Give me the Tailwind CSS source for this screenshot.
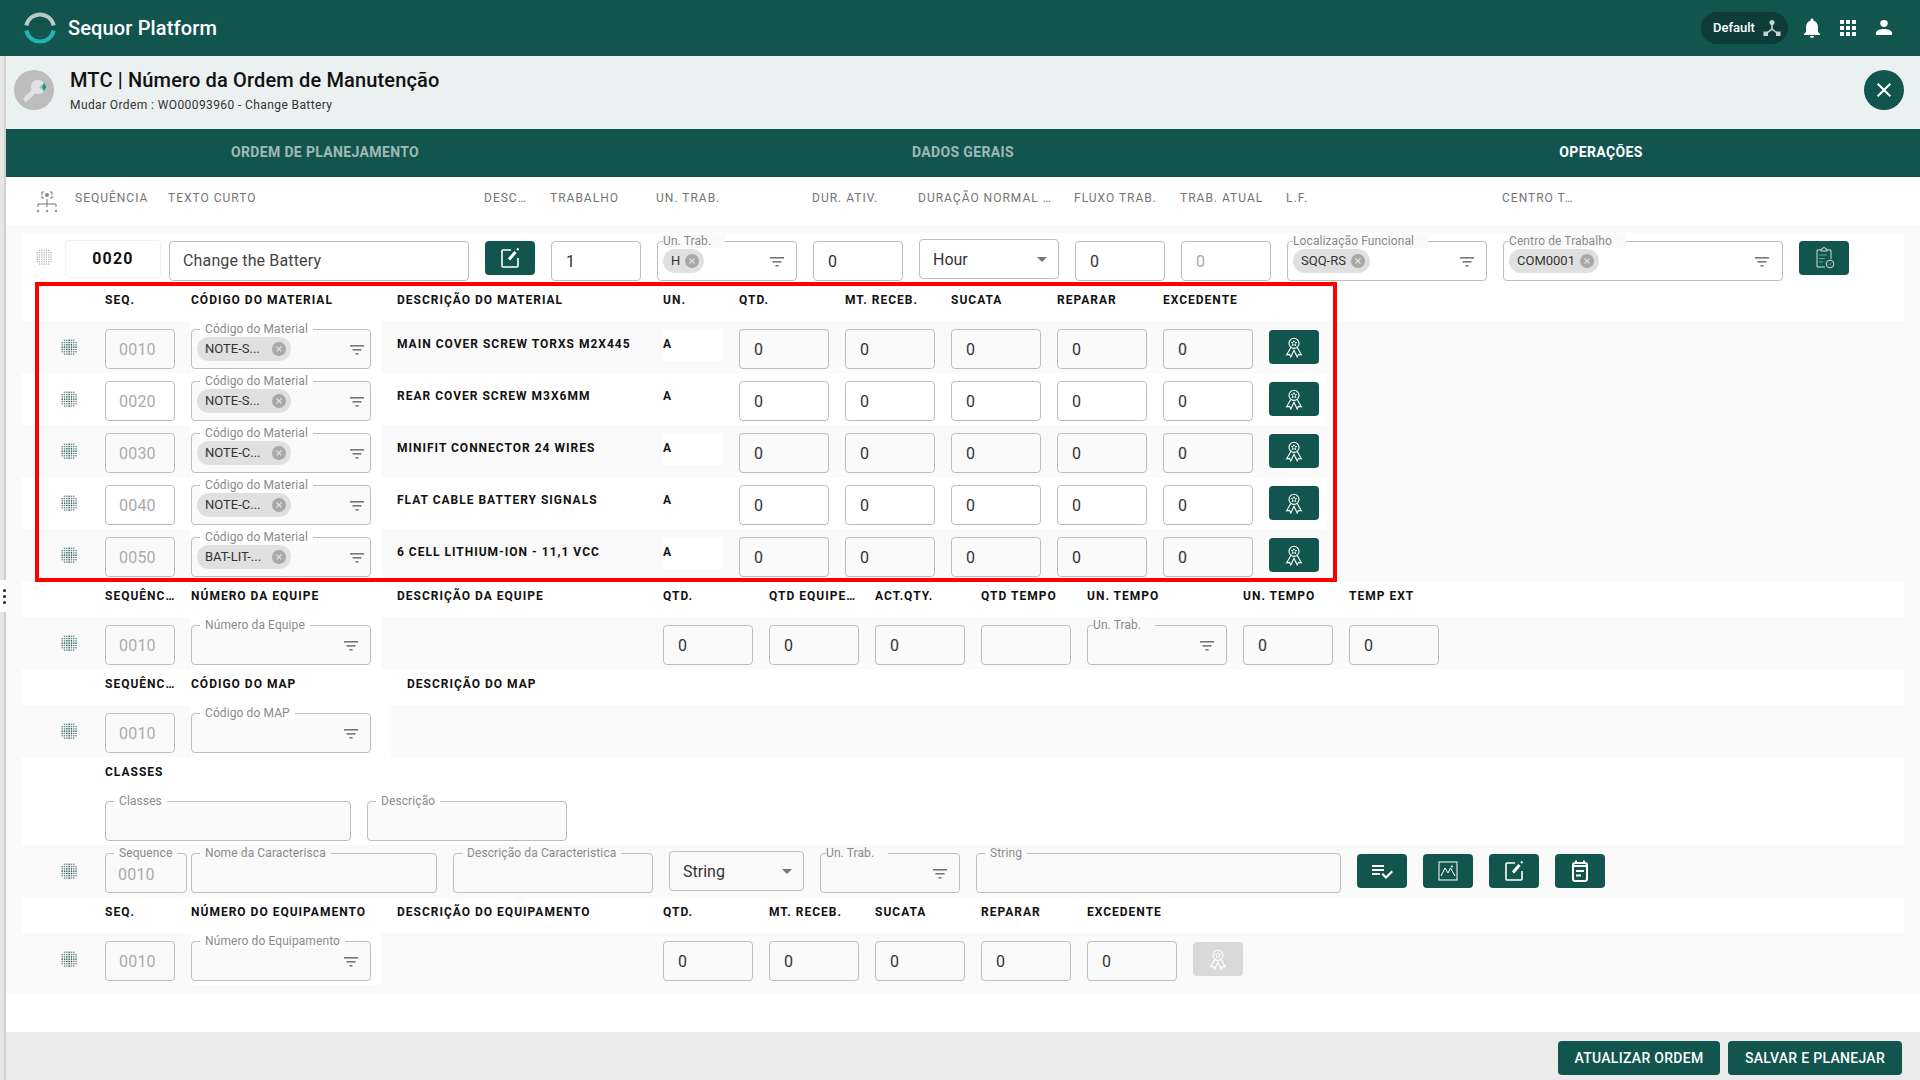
<!DOCTYPE html>
<html lang="pt-br">
<head>
    <meta charset="UTF-8">
    <meta name="viewport" content="width=device-width, initial-scale=1.0">
    <title>Sequor Platform - Ordem de Manutenção</title>
    <script src="https://cdn.jsdelivr.net/npm/@tailwindcss/browser@4"></script>
</head>
<body class="h-screen w-[1920px] overflow-hidden flex flex-col bg-white font-['Roboto',sans-serif] text-[#333]">
    <!-- barra do topo -->
    <header class="h-14 shrink-0 bg-[#12544e] flex items-center text-white">
        <svg class="ml-6 w-8 h-8" viewBox="0 0 32 32" fill="none" stroke-width="4">
            <path d="M2.3 13.5A14 14 0 0 1 29.7 13.5" stroke="#b9c9c6"/>
            <path d="M2.3 18.5A14 14 0 0 0 29.7 18.5" stroke="#1fb7ad"/>
        </svg>
        <span class="ml-3 text-xl font-medium tracking-[0.15px]">Sequor Platform</span>
        <div class="ml-auto w-[87px] h-8 rounded-full bg-[#0e3c38] flex items-center pl-3 text-[13px] font-medium">
            Default
            <svg class="ml-2 w-[18px] h-[18px]" viewBox="0 0 18 18" fill="#c9d4d2"><circle cx="9" cy="3.5" r="2.5"/><rect x="0.5" y="12.5" width="4.5" height="4.5"/><rect x="13" y="12.5" width="4.5" height="4.5"/><path d="M9 5v5l-5 4M9 10l5 4" fill="none" stroke="#c9d4d2" stroke-width="1.6"/></svg>
        </div>
        <svg class="ml-3 w-6 h-6" viewBox="0 0 24 24" fill="#fff"><path d="M12 22c1.1 0 2-.9 2-2h-4c0 1.1.89 2 2 2zm6-6v-5c0-3.07-1.64-5.64-4.5-6.32V4c0-.83-.67-1.5-1.5-1.5s-1.5.67-1.5 1.5v.68C7.63 5.36 6 7.92 6 11v5l-2 2v1h16v-1l-2-2z"/></svg>
        <svg class="ml-3 w-6 h-6" viewBox="0 0 24 24" fill="#fff"><path d="M4 8h4V4H4v4zm6 12h4v-4h-4v4zm-6 0h4v-4H4v4zm0-6h4v-4H4v4zm6 0h4v-4h-4v4zm6-10v4h4V4h-4zm-6 4h4V4h-4v4zm6 6h4v-4h-4v4zm0 6h4v-4h-4v4z"/></svg>
        <svg class="ml-3 mr-6 w-6 h-6" viewBox="0 0 24 24" fill="#fff"><path d="M12 11c2.210 0 3.800-1.500 3.800-3.700S14.200 4 12 4 8.200 5.100 8.200 7.300 9.800 11 12 11zm0 2c-3.500 0-8 1.300-8 3.800V19h16v-2.200c0-2.500-4.500-3.800-8-3.800z"/></svg>
    </header>

    <div class="flex-1 min-h-0 flex relative">
        <!-- trilho lateral -->
        <aside class="w-[6px] shrink-0 bg-[#e6e6e6] border-r-2 border-[#d0d0d0]"></aside>
        <div class="absolute left-0 top-[524px] w-2 h-8 bg-white rounded-r flex flex-col items-center justify-center gap-[3px]">
            <span class="w-[3px] h-[3px] rounded-full bg-[#222]"></span>
            <span class="w-[3px] h-[3px] rounded-full bg-[#222]"></span>
            <span class="w-[3px] h-[3px] rounded-full bg-[#222]"></span>
        </div>

        <main class="flex-1 min-w-0 flex flex-col">
            <!-- título -->
            <div class="h-[73px] shrink-0 bg-[#ebf0f0] flex items-start pt-[14px]">
                <div class="ml-2 w-10 h-10 rounded-full bg-[#bdbdbd] flex items-center justify-center">
                    <svg class="w-7 h-7" viewBox="0 0 28 28"><circle cx="18" cy="11" r="7" fill="#e2e2e2"/><path d="M6 23l11-11" stroke="#e2e2e2" stroke-width="5" stroke-linecap="round"/><path d="M19 11l7-6v12z" fill="#bdbdbd"/><path d="M24 7l2.500 4-2.500 4-2-4z" fill="#0f9d86"/></svg>
                </div>
                <div class="ml-4 -mt-[2px]">
                    <h1 class="text-xl font-medium text-[#111] leading-6 tracking-[0.15px]">MTC | Número da Ordem de Manutenção</h1>
                    <p class="mt-[5px] text-xs text-[#333] tracking-[0.4px]">Mudar Ordem : WO00093960 - Change Battery</p>
                </div>
                <button class="ml-auto mr-4 w-10 h-10 rounded-full bg-[#12544e] flex items-center justify-center">
                    <svg class="w-6 h-6" viewBox="0 0 24 24" fill="#fff"><path d="M19 6.41L17.59 5 12 10.59 6.41 5 5 6.41 10.59 12 5 17.59 6.41 19 12 13.41 17.59 19 19 17.59 13.41 12z"/></svg>
                </button>
            </div>

            <!-- abas -->
            <nav class="h-12 shrink-0 bg-[#12544e] grid grid-cols-3 pb-[2px] text-sm font-bold tracking-[0.35px] text-center items-center">
                <span class="text-white/60">ORDEM DE PLANEJAMENTO</span>
                <span class="text-white/60">DADOS GERAIS</span>
                <span class="text-white">OPERAÇÕES</span>
            </nav>

            <!-- títulos das colunas -->
            <div class="h-12 shrink-0 flex items-start text-xs text-[#757575] tracking-[1px] whitespace-nowrap">
                <svg class="ml-[29px] mt-[12px] w-[24px] h-[24px] shrink-0" viewBox="0 0 24 24" fill="none" stroke="#777" stroke-width="1">
                    <path d="M9 3H7v3M15 3h2v3M7 7v2h2M17 7v2h-2"/><circle cx="12" cy="6" r="2" fill="#888" stroke="none"/>
                    <path d="M12 10v4M3 18v-3h18v3M12 14v4"/><circle cx="3" cy="22" r="1.3" fill="#7fa39f" stroke="none"/><circle cx="12" cy="22" r="1.3" fill="#7fa39f" stroke="none"/><circle cx="21" cy="22" r="1.3" fill="#7fa39f" stroke="none"/>
                </svg>
                <span class="ml-[16px] mt-[13px] w-[93px]">SEQUÊNCIA</span>
                <span class="mt-[13px] w-[316px]">TEXTO CURTO</span>
                <span class="mt-[13px] w-[66px]">DESC…</span>
                <span class="mt-[13px] w-[106px]">TRABALHO</span>
                <span class="mt-[13px] w-[156px]">UN. TRAB.</span>
                <span class="mt-[13px] w-[106px]">DUR. ATIV.</span>
                <span class="mt-[13px] w-[156px]">DURAÇÃO NORMAL …</span>
                <span class="mt-[13px] w-[106px]">FLUXO TRAB.</span>
                <span class="mt-[13px] w-[106px]">TRAB. ATUAL</span>
                <span class="mt-[13px] w-[216px]">L.F.</span>
                <span class="mt-[13px]">CENTRO T…</span>
            </div>

            <!-- conteúdo da operação -->
            <div id="content" class="h-[768px] shrink-0 bg-[#fafafa] pt-2 pl-4 pr-4 relative"></div>
            <div class="flex-1"></div>

            <footer class="h-12 shrink-0 bg-[#ebebeb] flex items-center justify-end gap-2 pt-1 pr-[18px] text-sm font-medium tracking-[0.3px] text-white">
                <button class="w-[162px] h-[34px] bg-[#12544e] rounded">ATUALIZAR ORDEM</button>
                <button class="w-[174px] h-[34px] bg-[#12544e] rounded">SALVAR E PLANEJAR</button>
            </footer>
        </main>
    </div>

    <script>
        const labelCls = 'text-xs font-bold tracking-[1px] text-[#111] whitespace-nowrap';

        // grade de pontos usada para arrastar a linha
        function drag(light) {
            let dots = '';
            for (let r = 0; r < 7; r++) {
                for (let c = 0; c < 7; c++) {
                    const d = Math.hypot(r - 3, c - 3);
                    if (d > 3.7) continue;
                    const color = light ? '#b8b8b8' : (d < 1.6 || r === 3 || c === 3 ? '#0a3f3a' : '#55807a');
                    dots += `<rect x="${c * 2.3 + 0.6}" y="${r * 2.3 + 0.6}" width="1.300" height="1.300" fill="${color}"/>`;
                }
            }
            return `<svg class="w-4 h-4 shrink-0" viewBox="0 0 16 16">${dots}</svg>`;
        }

        function box(value, w = 'w-[90px]', color = 'text-[#333]') {
            const pad = w === 'w-[70px]' ? 'pl-[13px]' : 'pl-[14px]';
            return `<div class="${w} h-10 shrink-0 border border-[#bdbdbd] rounded ${pad} pt-[2px] flex items-center text-base tracking-[0.2px] ${color}">${value}</div>`;
        }

        const filterIcon = `<svg class="absolute top-[12px] w-4 h-4" style="right:var(--fr,5px)" viewBox="0 0 16 16" fill="#777"><rect x="1" y="3" width="14" height="1.6"/><rect x="3.5" y="7" width="9" height="1.6"/><rect x="6.5" y="11" width="3" height="1.6"/></svg>`;

        function chip(text, w = '') {
            return `<span class="absolute left-[5px] top-[7px] h-6 ${w} rounded-full bg-[#e0e0e0] flex items-center pl-2 pr-[5px] text-[13px] text-[#333] gap-[5px] whitespace-nowrap"><span class="flex-1">${text}</span>
                <svg class="w-[14px] h-[14px]" viewBox="0 0 14 14"><circle cx="7" cy="7" r="7" fill="#a8a8a8"/><path d="M4.5 4.5l5 5M9.5 4.5l-5 5" stroke="#e0e0e0" stroke-width="1.2"/></svg></span>`;
        }

        // campo com a legenda cortando a borda
        function field(label, w, opts = {}) {
            const notch = opts.tight
                ? 'left-[5px] pr-[14px] bg-[#fafafa]'
                : 'left-2 px-[5px] ' + (opts.white ? 'bg-white' : 'bg-[#fafafa]');
            const bg = opts.white ? 'bg-[#fafafa]' : '';
            const style = opts.filterRight ? `--fr:${opts.filterRight}` : '';
            return `<div class="${w} h-10 shrink-0 border border-[#bdbdbd] rounded relative ${bg}" style="${style}">
                <span class="absolute -top-2 ${notch} text-xs leading-[14px] tracking-[0.1px] text-[#8a8a8a] whitespace-nowrap">${label}</span>
                ${opts.chip || ''}${opts.value ? `<span class="absolute left-[12px] top-[9px] text-base tracking-[0.2px] text-[#aaa]">${opts.value}</span>` : ''}
                ${opts.noFilter ? '' : filterIcon}
            </div>`;
        }

        function select(value, w) {
            return `<div class="${w} h-10 shrink-0 border border-[#bdbdbd] rounded pl-[13px] pr-[11px] pt-px flex items-center justify-between text-base text-[#333] -mt-[2px]">${value}
                <svg class="w-[10px] h-[5px]" viewBox="0 0 10 5" fill="#757575"><path d="M0 0h10L5 5z"/></svg></div>`;
        }

        function btn(icon, cls = 'bg-[#12544e]') {
            return `<button class="w-[50px] h-[34px] shrink-0 rounded flex items-center justify-center ${cls}">${icon}</button>`;
        }

        const award = (stroke = '#fff') => `<svg class="w-[22px] h-[22px]" viewBox="0 0 24 24" fill="none" stroke="${stroke}" stroke-width="1.200"><circle cx="12" cy="8" r="5.500"/><path d="M12 5l.9 1.900 2.100.2-1.600 1.400.5 2.100-1.900-1.100-1.900 1.100.5-2.100L9 7.100l2.100-.2z" stroke-width="0.900"/><path d="M8.500 12.500L4 20.500l3.200-.5 1.300 3L12 15.500l3.500 7.500 1.300-3 3.200.5-4.500-8"/></svg>`;
        const editIcon = `<svg class="w-6 h-6" viewBox="0 0 24 24" fill="none" stroke="#fff"><path d="M13 4H5a1 1 0 0 0-1 1v15a1 1 0 0 0 1 1h14a1 1 0 0 0 1-1v-8" stroke-width="1.600"/><path d="M11 13.500L17.500 6" stroke-width="3"/><path d="M19 2.500l1.500 1.500" stroke-width="2"/></svg>`;
        const clipIcon = `<svg class="w-6 h-6" viewBox="0 0 24 24" fill="none" stroke="#cfe0dd" stroke-width="1"><path d="M9 4H5v17h8M15 4h4v9"/><path d="M9 5V3h1.500a1.500 1.500 0 0 1 3 0H15v2z"/><path d="M7 9h8M7 12.500h6M7 16h4" stroke="#4ea89c"/><circle cx="18" cy="18" r="3.800"/><path d="M16.500 18l1 1 2-2" stroke="#4ea89c"/></svg>`;
        const checkIcon = `<svg class="w-6 h-6" viewBox="0 0 24 24" fill="#fff"><path d="M14 10H2v2h12v-2zm0-4H2v2h12V6zM2 16h8v-2H2v2zm19.500-4.500L23 13l-6.990 7-4.510-4.500L13 14l3.010 3 5.490-5.500z"/></svg>`;
        const imageIcon = `<svg class="w-6 h-6" viewBox="0 0 24 24" fill="none" stroke="#fff"><rect x="3" y="3" width="18" height="18" stroke-width="1"/><path d="M5 17l4-8 3 5 2.500-5 4.500 8" stroke-width="1"/><circle cx="16" cy="7.500" r="1" fill="#fff" stroke="none"/></svg>`;
        const noteIcon = `<svg class="w-6 h-6" viewBox="0 0 24 24" fill="none" stroke="#fff" stroke-width="2"><rect x="5" y="4" width="14" height="18" rx="2"/><path d="M8 1.500v3M16 1.500v3M5 7h14M8 12h8M8 16.500h5"/></svg>`;

        function header(cols, cls = 'h-9') {
            return `<div class="${cls} bg-white flex items-start pt-[7px] pl-[83px] ${labelCls}">${cols}</div>`;
        }

        const rows = [
            ['0010', 'NOTE-S...', 'MAIN COVER SCREW TORXS M2X445'],
            ['0020', 'NOTE-S...', 'REAR COVER SCREW M3X6MM'],
            ['0030', 'NOTE-C...', 'MINIFIT CONNECTOR 24 WIRES'],
            ['0040', 'NOTE-C...', 'FLAT CABLE BATTERY SIGNALS'],
            ['0050', 'BAT-LIT-...', '6 CELL LITHIUM-ION - 11,1 VCC'],
        ];

        let html = '';

        // linha principal da operação
        html += `<div class="h-[49px] bg-white flex items-start pt-2">
            <div class="w-[43px] h-8 flex items-center justify-center">${drag(true)}</div>
            <div class="w-[96px] h-[38px] rounded border border-[#f1f1f1] flex items-center justify-center text-base font-bold tracking-[1.200px] text-[#111] -mt-px">0020</div>
            <div class="ml-2 w-[300px] h-10 border border-[#bdbdbd] rounded pl-[13px] flex items-center text-base tracking-[0.15px] text-[#444]">Change the Battery</div>
            <div class="ml-4 flex items-start gap-4">
                ${btn(editIcon)}
                ${box('1')}
                ${field('Un. Trab.', 'w-[140px]', { tight: true, chip: chip('H'), filterRight: '11px' })}
                ${box('0')}
                ${select('Hour', 'w-[140px]')}
                ${box('0')}
                ${box('0', 'w-[90px]', 'text-[#aaa]')}
                ${field('Localização Funcional', 'w-[200px]', { tight: true, chip: chip('SQQ-RS'), filterRight: '11px' })}
                ${field('Centro de Trabalho', 'w-[280px]', { tight: true, chip: chip('COM0001'), filterRight: '12px' })}
                ${btn(clipIcon)}
            </div>
        </div>`;

        // materiais
        html += `<div class="h-[39px] bg-white flex items-start pt-[10px] pl-[83px] ${labelCls}">
            <span class="w-[86px]">SEQ.</span><span class="w-[206px]">CÓDIGO DO MATERIAL</span><span class="w-[266px]">DESCRIÇÃO DO MATERIAL</span><span class="w-[76px]">UN.</span><span class="w-[106px]">QTD.</span><span class="w-[106px]">MT. RECEB.</span><span class="w-[106px]">SUCATA</span><span class="w-[106px]">REPARAR</span><span>EXCEDENTE</span>
        </div>`;
        rows.forEach((r, i) => {
            const band = i % 2 === 0 ? 'bg-[#fafafa]' : 'bg-white';
            html += `<div class="h-[52px] w-[1305px] ${band} flex items-start">
                <div class="w-[83px] h-[52px] flex items-center justify-center pl-[11px]">${drag()}</div>
                <div class="w-[86px] pt-2">${box(r[0], 'w-[70px]', 'text-[#aaa]')}</div>
                <div class="w-[190px] h-[52px] pt-2 bg-white">${field('Código do Material', 'w-[180px]', { white: true, chip: chip(r[1], 'w-[94px]') })}</div>
                <div class="w-[282px] pl-4 pt-4 ${labelCls} leading-[14px]">${r[2]}</div>
                <div class="w-[60px] h-8 mt-2 bg-white ${labelCls} pt-2 leading-[14px]">A</div>
                <div class="ml-4 pt-2 flex items-start gap-4">
                    ${box('0')}${box('0')}${box('0')}${box('0')}${box('0')}
                    <div class="pt-px">${btn(award())}</div>
                </div>
            </div>`;
        });

        // equipe
        html += header(`<span class="w-[70px]">SEQUÊNC…</span><span class="ml-4 w-[206px]">NÚMERO DA EQUIPE</span><span class="w-[266px]">DESCRIÇÃO DA EQUIPE</span><span class="w-[106px]">QTD.</span><span class="w-[106px]">QTD EQUIPE…</span><span class="w-[106px]">ACT.QTY.</span><span class="w-[106px]">QTD TEMPO</span><span class="w-[156px]">UN. TEMPO</span><span class="w-[106px]">UN. TEMPO</span><span>TEMP EXT</span>`);
        html += `<div class="h-[52px] bg-[#fafafa] flex items-start">
            <div class="w-[83px] h-[52px] flex items-center justify-center pl-[11px]">${drag()}</div>
            <div class="w-[86px] pt-2">${box('0010', 'w-[70px]', 'text-[#aaa]')}</div>
            <div class="w-[190px] h-[52px] pt-2 bg-white">${field('Número da Equipe', 'w-[180px]', { white: true, filterRight: '11px' })}</div>
            <div class="w-[282px] h-[52px]"></div>
            <div class="pt-2 flex items-start gap-4">
                ${box('0')}${box('0')}${box('0')}${box('')}
                ${field('Un. Trab.', 'w-[140px]', { tight: true, filterRight: '11px' })}
                ${box('0')}${box('0')}
            </div>
        </div>`;

        // MAP
        html += header(`<span class="w-[70px]">SEQUÊNC…</span><span class="ml-4 w-[216px]">CÓDIGO DO MAP</span><span>DESCRIÇÃO DO MAP</span>`);
        html += `<div class="h-[52px] bg-[#fafafa] flex items-start">
            <div class="w-[83px] h-[52px] flex items-center justify-center pl-[11px]">${drag()}</div>
            <div class="w-[86px] pt-2">${box('0010', 'w-[70px]', 'text-[#aaa]')}</div>
            <div class="w-[200px] h-[52px] pt-2 bg-white">${field('Código do MAP', 'w-[180px]', { white: true, filterRight: '11px' })}</div>
        </div>`;

        // classes
        html += `<div class="h-[88px] bg-white pl-[83px] pt-[8px]">
            <div class="${labelCls} leading-[14px]">CLASSES</div>
            <div class="mt-[22px] flex gap-4">
                ${field('Classes', 'w-[246px]', { white: true, noFilter: true })}
                ${field('Descrição', 'w-[200px]', { white: true, noFilter: true })}
            </div>
        </div>`;

        // características
        html += `<div class="h-[52px] bg-[#fafafa] flex items-start">
            <div class="w-[83px] h-[52px] flex items-center justify-center pl-[11px]">${drag()}</div>
            <div class="pt-2 flex items-start">
                ${field('Sequence', 'w-[82px]', { noFilter: true, value: '0010' })}
                <div class="ml-1">${field('Nome da Caracterisca', 'w-[246px]', { noFilter: true })}</div>
                <div class="ml-4">${field('Descrição da Caracteristica', 'w-[200px]', { noFilter: true })}</div>
                <div class="ml-4">${select('String', 'w-[135px]')}</div>
                <div class="ml-4">${field('Un. Trab.', 'w-[140px]', { tight: true, filterRight: '11px' })}</div>
                <div class="ml-4">${field('String', 'w-[365px]', { noFilter: true })}</div>
                <div class="ml-4 pt-px flex gap-4">${btn(checkIcon)}${btn(imageIcon)}${btn(editIcon)}${btn(noteIcon)}</div>
            </div>
        </div>`;

        // equipamento
        html += header(`<span class="w-[86px]">SEQ.</span><span class="w-[206px]">NÚMERO DO EQUIPAMENTO</span><span class="w-[266px]">DESCRIÇÃO DO EQUIPAMENTO</span><span class="w-[106px]">QTD.</span><span class="w-[106px]">MT. RECEB.</span><span class="w-[106px]">SUCATA</span><span class="w-[106px]">REPARAR</span><span>EXCEDENTE</span>`);
        html += `<div class="h-[52px] bg-[#fafafa] flex items-start">
            <div class="w-[83px] h-[52px] flex items-center justify-center pl-[11px]">${drag()}</div>
            <div class="w-[86px] pt-2">${box('0010', 'w-[70px]', 'text-[#aaa]')}</div>
            <div class="w-[190px] h-[52px] pt-2 bg-white">${field('Número do Equipamento', 'w-[180px]', { white: true, filterRight: '11px' })}</div>
            <div class="w-[282px] h-[52px]"></div>
            <div class="pt-2 flex items-start gap-4">
                ${box('0')}${box('0')}${box('0')}${box('0')}${box('0')}
                <div class="pt-px">${btn(award('#fff'), 'bg-[#d9d9d9]')}</div>
            </div>
        </div>`;

        // destaque vermelho sobre os materiais
        html += `<div class="absolute left-[29px] top-[57px] w-[1302px] h-[300px] border-4 border-[#ff0000] pointer-events-none"></div>`;

        document.getElementById('content').innerHTML = html;
    </script>
</body>
</html>
